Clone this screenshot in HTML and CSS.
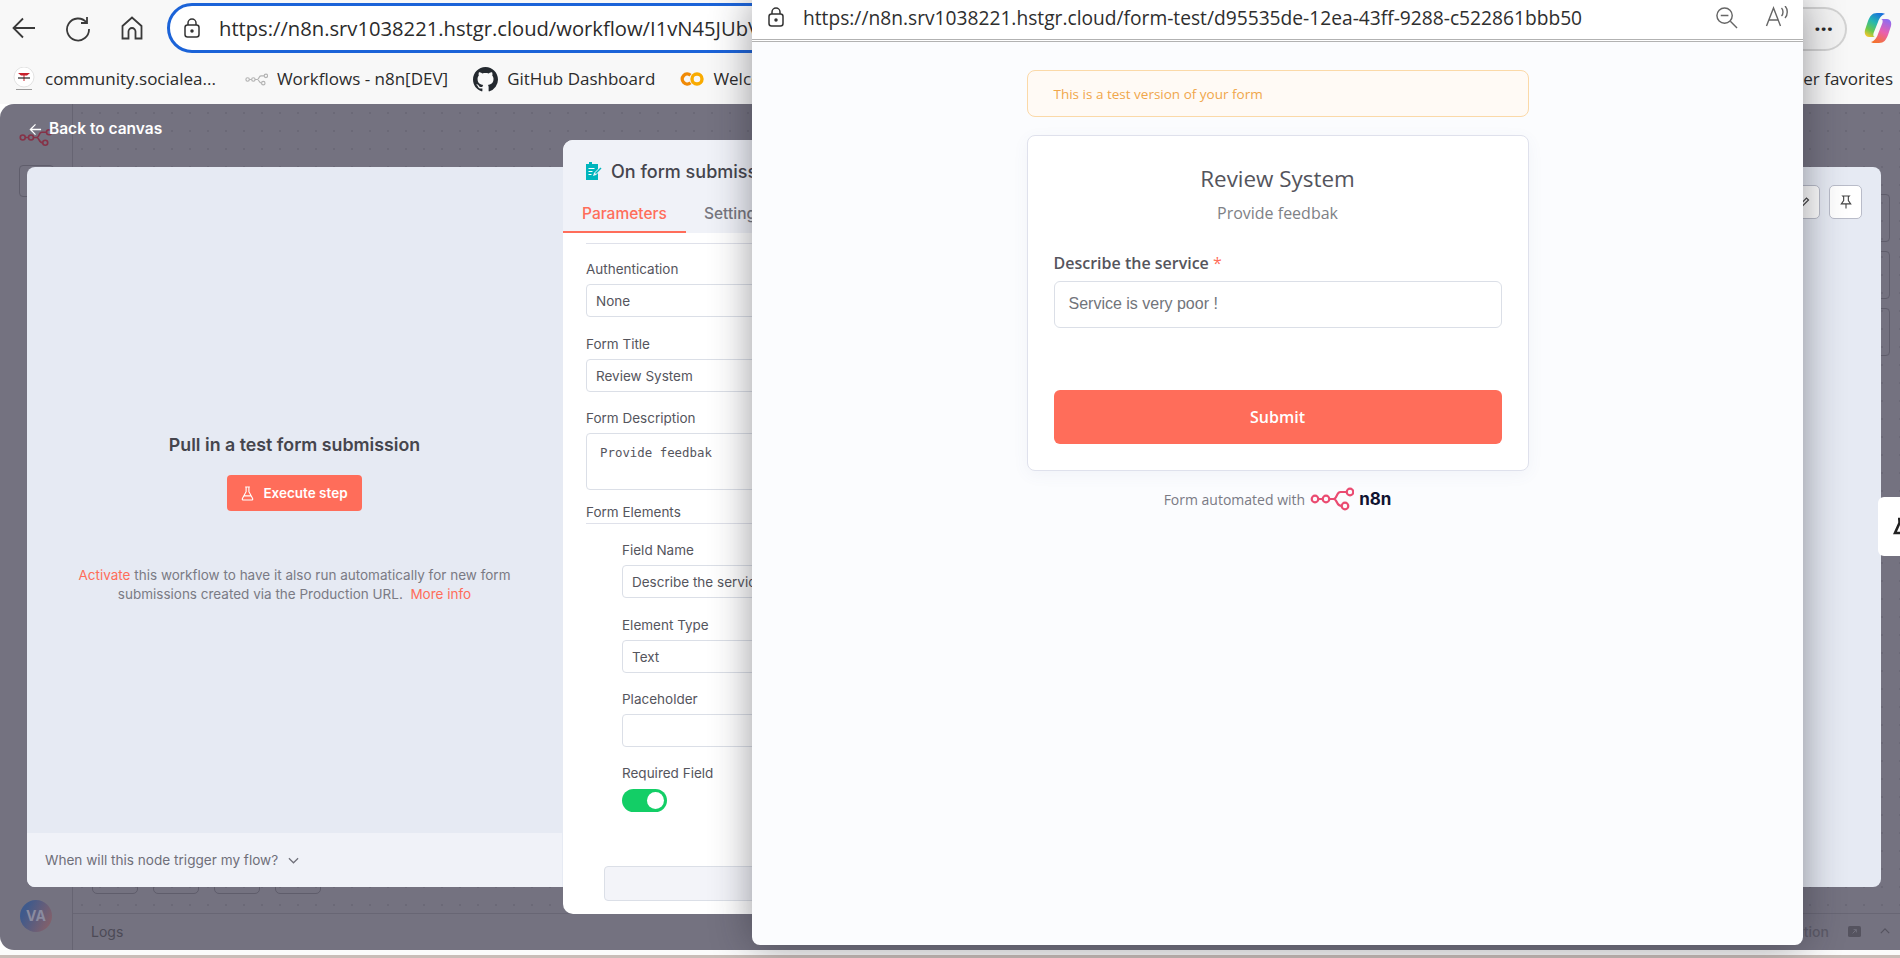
FILE: index.html
```html
<!DOCTYPE html>
<html>
<head>
    <title>Review System</title>
    <link rel="stylesheet" href="styles.css">
</head>
<body>
    <div class="browser">
        <div class="toolbar">
            <svg class="tool-icon back" viewBox="0 0 24 24"><path d="M23 12H1.5M11 2.5 1.5 12l9.5 9.5"/></svg>
            <svg class="tool-icon reload" viewBox="0 0 26 26"><path d="M21.5 6.5A11 11 0 1 0 24 13M22 1v6h-6"/></svg>
            <svg class="tool-icon home" viewBox="0 0 22 24"><path d="M1.5 10 11 1.5 20.5 10v12.5h-6v-7a3.5 3.5 0 0 0-7 0v7h-6z"/></svg>
            <div class="url-pill">
                <svg class="lock" viewBox="0 0 16 20"><path d="M4 7V5a4 4 0 0 1 8 0v2"/><rect x="1" y="7" width="14" height="12" rx="2.5"/><circle cx="8" cy="13" r="1" fill="#333"/></svg>
                <span>https://n8n.srv1038221.hstgr.cloud/workflow/I1vN45JUbVxyz</span>
            </div>
            <div class="end-pill"><span>···</span></div>
            <svg class="copilot" viewBox="0 0 28 32">
                <defs>
                    <linearGradient id="copA" x1="0.7" y1="0" x2="0.2" y2="1"><stop offset="0" stop-color="#1b72dc"/><stop offset="0.4" stop-color="#25b8b0"/><stop offset="0.75" stop-color="#6cc84a"/><stop offset="1" stop-color="#f2c62e"/></linearGradient>
                    <linearGradient id="copB" x1="0.7" y1="0" x2="0.3" y2="1"><stop offset="0" stop-color="#8f6cf0"/><stop offset="0.5" stop-color="#e95fb0"/><stop offset="1" stop-color="#f4722e"/></linearGradient>
                </defs>
                <path d="M13 1c-5 0-7 3-9 8L1 18c-1 4 1 7 4 7h6c-2 0-2-3-1-5l4-10c1-3 3-7 7-8-1-1-3-1-4-1z" fill="url(#copA)"/>
                <path d="M15 31c5 0 7-3 9-8l3-9c1-4-1-7-4-7h-6c2 0 2 3 1 5l-4 10c-1 3-3 7-7 8 1 1 3 1 4 1z" fill="url(#copB)"/>
            </svg>
        </div>
        <div class="bookmarks">
            <div class="bookmark first">
                <svg class="mark-social" viewBox="0 0 24 24"><circle cx="12" cy="10" r="10" fill="#fff" stroke="#e3e3e3"/><path d="M6 6h12l-3 2.500h-2.500V14h-1V8.500H9z" fill="#c8202c"/><path d="M6 11h12" stroke="#222" stroke-width="1.200"/><path d="M4 22.500h16" stroke="#999"/></svg>
                <span>community.socialea...</span>
            </div>
            <div class="bookmark second">
                <svg class="mark-n8n" viewBox="0 0 44 24"><use href="#n8nLogo"/></svg>
                <span>Workflows - n8n[DEV]</span>
            </div>
            <div class="bookmark third">
                <svg class="mark-github" viewBox="0 0 16 16"><path d="M8 0C3.58 0 0 3.58 0 8c0 3.54 2.29 6.53 5.47 7.59.4.07.55-.17.55-.38 0-.19-.01-.82-.01-1.49-2.01.37-2.53-.49-2.69-.94-.09-.23-.48-.94-.82-1.13-.28-.15-.68-.52-.01-.53.63-.01 1.08.58 1.23.82.72 1.21 1.87.87 2.33.66.07-.52.28-.87.51-1.07-1.78-.2-3.64-.89-3.64-3.95 0-.87.31-1.59.82-2.15-.08-.2-.36-1.02.08-2.12 0 0 .67-.21 2.2.82.64-.18 1.32-.27 2-.27.68 0 1.36.09 2 .27 1.53-1.04 2.2-.82 2.2-.82.44 1.1.16 1.92.08 2.12.51.56.82 1.27.82 2.15 0 3.07-1.87 3.75-3.65 3.95.29.25.54.73.54 1.48 0 1.07-.01 1.93-.01 2.2 0 .21.15.46.55.38A8.013 8.013 0 0016 8c0-4.42-3.58-8-8-8z"/></svg>
                <span>GitHub Dashboard</span>
            </div>
            <div class="bookmark fourth">
                <svg class="mark-colab" viewBox="0 0 24 14"><circle cx="17" cy="7" r="5" stroke="#f9ab00"/><path d="M10.500 3.200A5 5 0 1 0 10.500 10.800" stroke="#f08a06"/></svg>
                <span>Welcome To Colab</span>
            </div>
            <div class="other-favorites">Other favorites</div>
        </div>
    </div>

    <div class="app">
        <div class="sidebar">
            <div class="avatar">VA</div>
        </div>
        <div class="canvas">
            <div class="canvas-nodes">
                <i></i><i></i><i></i><i></i>
            </div>
            <div class="logs-bar">
                <span>Logs</span>
                <span class="logs-right">Execution
                    <svg viewBox="0 0 16 14"><rect x="1" y="1" width="14" height="12" rx="2" fill="#55535f"/><path d="M6 9l4-4M7 5h3v3" stroke="#747280" fill="none"/></svg>
                    <svg class="logs-up" viewBox="0 0 12 7"><path d="M1 6l5-5 5 5"/></svg>
                </span>
            </div>
        </div>

        <svg class="dim-logo" viewBox="0 0 44 24"><use href="#n8nLogo"/></svg>
        <div class="side-box"></div>
        <div class="right-boxes"><i></i><i></i><i></i></div>

        <div class="back-link">
            <svg viewBox="0 0 14 14"><path d="M13 7H1.500M7 1.500 1.500 7 7 12.500"/></svg>
            <span>Back to canvas</span>
        </div>

        <div class="ndv">
            <div class="input-panel">
                <div class="input-body">
                    <h3>Pull in a test form submission</h3>
                    <button class="execute">
                        <svg viewBox="0 0 14 16"><path d="M4.500 1h5M5.500 1v5L1.500 13.500c-.5 1 .2 1.500 1 1.500h9c.8 0 1.500-.5 1-1.500L8.500 6V1M3.500 10.500h7"/></svg>
                        Execute step
                    </button>
                    <p><a>Activate</a> this workflow to have it also run automatically for new form<br>submissions created via the Production URL.&nbsp; <a>More info</a></p>
                </div>
                <div class="input-foot">
                    When will this node trigger my flow?
                    <svg viewBox="0 0 12 7"><path d="M1 1l5 5 5-5"/></svg>
                </div>
            </div>
            <div class="ndv-tools">
                <span class="tool-btn"><svg viewBox="0 0 14 14"><path d="M2 12l1-3 6.500-6.500 2 2L5 11z"/></svg></span>
                <span class="tool-btn"><svg viewBox="0 0 14 16"><path d="M3.500 1h7l-1 1v4L12 9.500H2L4.500 6V2zM7 9.500v5"/></svg></span>
            </div>
        </div>

        <div class="help-tab">
            <svg viewBox="0 0 20 20"><path d="M7 2h3M8.500 2v4L4 16h12" fill="none" stroke="#222" stroke-width="2.600"/></svg>
        </div>

        <div class="params">
            <div class="params-head">
                <div class="params-title">
                    <svg viewBox="0 0 18 18"><path d="M2 2h3V0h3v2h6v5l-4 4-1 3 3-1 2-2v7H2z" fill="#00b5bd"/><path d="M4.500 6.500h6M4.500 9.500h4M4.500 12.500h3" stroke="#fff"/><path d="M11 11l5.500-5.500 1 1L12 12z" fill="#00b5bd"/></svg>
                    <span>On form submission</span>
                </div>
                <div class="tabs">
                    <span class="tab active">Parameters</span>
                    <span class="tab">Settings</span>
                </div>
            </div>
            <div class="params-body">
                <div class="rule"></div>
                <label class="first-label">Authentication</label>
                <div class="field">None</div>
                <label>Form Title</label>
                <div class="field">Review System</div>
                <label>Form Description</label>
                <div class="field area">Provide feedbak</div>
                <label class="section">Form Elements</label>
                <div class="element">
                    <label>Field Name</label>
                    <div class="field">Describe the service</div>
                    <label>Element Type</label>
                    <div class="field">Text</div>
                    <label>Placeholder</label>
                    <div class="field last-field"></div>
                    <label>Required Field</label>
                    <div class="toggle"><i></i></div>
                </div>
                <div class="add-element"></div>
            </div>
        </div>
    </div>
    <div class="bottom-strip"></div>

    <div class="popup">
        <div class="popup-bar">
            <svg class="lock" viewBox="0 0 16 20"><path d="M4 7V5a4 4 0 0 1 8 0v2"/><rect x="1" y="7" width="14" height="12" rx="2.5"/><circle cx="8" cy="13" r="1" fill="#333"/></svg>
            <span class="popup-url">https://n8n.srv1038221.hstgr.cloud/form-test/d95535de-12ea-43ff-9288-c522861bbb50</span>
            <svg class="popup-zoom" viewBox="0 0 24 24"><circle cx="10" cy="10" r="8"/><path d="M6 10h8M16 16l7 7"/></svg>
            <svg class="popup-read" viewBox="0 0 24 22"><path d="M2 20 9 2l7 18M4.500 14h9M17 2c2 2 2 6 0 8M20.500 0c3 3 3 9 0 12"/></svg>
        </div>
        <div class="form-page">
            <div class="test-alert">This is a test version of your form</div>
            <div class="form-card">
                <h1>Review System</h1>
                <div class="form-desc">Provide feedbak</div>
                <div class="form-label">Describe the service <b>*</b></div>
                <div class="form-input">Service is very poor !</div>
                <button class="submit">Submit</button>
            </div>
            <div class="form-foot">
                <span>Form automated with</span>
                <svg viewBox="0 0 44 24">
                    <g id="n8nLogo" fill="none" stroke="#ea4b71" stroke-width="2.200">
                        <circle cx="5" cy="12" r="3.300"/>
                        <circle cx="16" cy="12" r="3.300"/>
                        <circle cx="40" cy="5" r="3.300"/>
                        <circle cx="35" cy="19" r="3.300"/>
                        <path d="M8.300 12h4.400M19.300 12h4.200c4 0 2.500-7 7-7h6.200M23.500 12c4 0 2.500 7 8.200 7"/>
                    </g>
                </svg>
                <strong>n8n</strong>
            </div>
        </div>
    </div>
</body>
</html>
```

FILE: styles.css
```css
html, body {
    margin: 0;
    padding: 0;
    height: 958px;
    overflow: hidden;
}

body {
    position: relative;
    background: #fff;
    font-family: 'Inter', 'Liberation Sans', sans-serif;
}

/* browser chrome */

.browser {
    height: 104px;
    background: #f8f8f8;
    font-family: 'Open Sans', 'Noto Sans', sans-serif;
    color: #2b2b2b;
}

.toolbar {
    height: 60px;
    display: flex;
    align-items: flex-start;
    padding-top: 3px;
    box-sizing: border-box;
}

.tool-icon {
    fill: none;
    stroke: #3a3a3a;
    stroke-width: 1.8;
    flex: none;
    margin-top: 13px;
}

.back {
    width: 24px;
    height: 24px;
    margin-left: 12px;
}

.reload {
    width: 26px;
    height: 26px;
    margin-left: 29px;
}

.home {
    width: 22px;
    height: 24px;
    margin-left: 30px;
}

.url-pill {
    margin-left: 24px;
    width: 680px;
    height: 50px;
    border: 3px solid #1b63d8;
    border-radius: 26px;
    box-sizing: border-box;
    background: #fff;
    display: flex;
    align-items: center;
    padding-left: 14px;
    gap: 19px;
    font-size: 20.200px;
    white-space: nowrap;
    overflow: hidden;
}

.lock {
    width: 16px;
    height: 20px;
    flex: none;
    fill: none;
    stroke: #333;
    stroke-width: 1.5;
}

.end-pill {
    margin-left: auto;
    margin-top: 4px;
    width: 90px;
    height: 44px;
    border: 2px solid #d2d2d2;
    border-left: 0;
    border-radius: 0 24px 24px 0;
    box-sizing: border-box;
    background: #f3f3f3;
    text-align: right;
    padding-right: 12px;
    font-size: 22px;
    font-weight: 700;
    line-height: 38px;
}

.copilot {
    width: 28px;
    height: 32px;
    margin: 9px 8px 0 17px;
    flex: none;
}

.bookmarks {
    height: 44px;
    display: flex;
    align-items: flex-start;
    padding-top: 2px;
    box-sizing: border-box;
    font-size: 17px;
    line-height: 34px;
}

.bookmark {
    display: flex;
    align-items: center;
    white-space: nowrap;
}

.first {
    margin-left: 12px;
}

.mark-social {
    width: 24px;
    height: 24px;
    margin-right: 9px;
}

.second {
    margin-left: 29px;
}

.mark-n8n {
    width: 23px;
    height: 13px;
    margin-right: 9px;
    opacity: 0.5;
    filter: grayscale(1);
}

.third {
    margin-left: 25px;
}

.mark-github {
    width: 25px;
    height: 25px;
    margin-right: 9px;
    fill: #24292f;
}

.fourth {
    margin-left: 25px;
}

.mark-colab {
    width: 24px;
    height: 14px;
    margin-right: 9px;
    fill: none;
    stroke-width: 3.400;
}

.other-favorites {
    margin-left: auto;
    margin-right: 7px;
}

/* n8n app under the dim overlay */

.app {
    position: relative;
    height: 846px;
    background: #747280;
    border-radius: 14px 0 0 14px;
    display: flex;
    overflow: hidden;
    color: #46444f;
}

.bottom-strip {
    height: 8px;
    background: linear-gradient(#fbfbfb 0, #fbfbfb 5px, #c9bdb8 5px);
}

.sidebar {
    width: 72px;
    flex: none;
    border-right: 1px solid #666472;
    position: relative;
}

.avatar {
    position: absolute;
    left: 20px;
    top: 796px;
    width: 32px;
    height: 32px;
    border-radius: 50%;
    background: linear-gradient(115deg, #3f5a8c 20%, #80606c 85%);
    color: #8a8ba0;
    font-size: 14px;
    font-weight: 700;
    line-height: 32px;
    text-align: center;
}

.canvas {
    flex: 1;
    background-image: radial-gradient(#6b6977 1px, transparent 1px);
    background-size: 18px 18px;
    position: relative;
}

.canvas-nodes {
    position: absolute;
    left: 19px;
    top: 760px;
    display: flex;
    gap: 15px;
}

.canvas-nodes i {
    width: 46px;
    height: 30px;
    border: 1px solid #5f5d6b;
    border-radius: 5px;
    box-sizing: border-box;
}

.logs-bar {
    position: absolute;
    left: 0;
    right: 0;
    top: 809px;
    bottom: 0;
    background: #747280;
    border-top: 1px solid #686674;
    display: flex;
    justify-content: space-between;
    align-items: center;
    padding: 0 10px 2px 18px;
    font-size: 14px;
    color: #4c4a56;
}

.logs-right {
    display: flex;
    align-items: center;
    gap: 18px;
    font-size: 14px;
    font-weight: 500;
    color: #5c5a68;
}

.logs-right svg {
    width: 15px;
    height: 13px;
}

.logs-right .logs-up {
    width: 10px;
    height: 6px;
    fill: none;
    stroke: #55535f;
    stroke-width: 1.4;
}

.dim-logo {
    position: absolute;
    left: 19px;
    top: 24px;
    width: 33px;
    height: 19px;
    opacity: 0.9;
    filter: brightness(0.58);
}

.side-box {
    position: absolute;
    left: 19px;
    top: 61px;
    width: 33px;
    height: 30px;
    border: 1px solid #5f5d6b;
    border-radius: 4px;
}

.right-boxes {
    position: absolute;
    right: 10px;
    top: 90px;
    display: flex;
    flex-direction: column;
    gap: 9px;
}

.right-boxes i {
    display: block;
    width: 30px;
    height: 48px;
    border: 1px solid #5f5d6b;
    border-radius: 4px;
    box-sizing: border-box;
}

.help-tab {
    position: absolute;
    right: 0;
    top: 393px;
    width: 22px;
    height: 59px;
    background: #fff;
    border-radius: 6px 0 0 6px;
    overflow: hidden;
}

.help-tab svg {
    width: 20px;
    height: 20px;
    margin: 20px 0 0 13px;
}

.back-link {
    position: absolute;
    left: 29px;
    top: 15px;
    display: flex;
    align-items: center;
    gap: 7px;
    color: #fff;
    font-size: 15.500px;
    font-weight: 600;
    line-height: 20px;
}

.back-link svg {
    width: 13px;
    height: 13px;
    fill: none;
    stroke: #fff;
    stroke-width: 1.4;
}

/* node details view */

.ndv {
    position: absolute;
    left: 27px;
    top: 63px;
    width: 1854px;
    height: 720px;
    background: #e6eaf3;
    border-radius: 8px;
    overflow: hidden;
}

.input-panel {
    width: 535px;
    height: 100%;
    display: flex;
    flex-direction: column;
}

.input-body {
    flex: 1;
    display: flex;
    flex-direction: column;
    align-items: center;
    padding-top: 267px;
    box-sizing: border-box;
}

.input-body h3 {
    margin: 0;
    font-size: 17.800px;
    line-height: 22px;
    font-weight: 600;
    color: #45454d;
}

.execute {
    margin-top: 19px;
    width: 135px;
    height: 36px;
    border: 0;
    border-radius: 4px;
    background: #ff6d5a;
    color: #fff;
    font-family: inherit;
    font-size: 13.500px;
    font-weight: 600;
    display: flex;
    align-items: center;
    justify-content: center;
    gap: 9px;
}

.execute svg {
    width: 13px;
    height: 15px;
    fill: none;
    stroke: #fff;
    stroke-width: 1.2;
}

.input-body p {
    margin: 55px 0 0;
    text-align: center;
    font-size: 13.500px;
    line-height: 18.500px;
    color: #7a7a84;
}

.input-body a {
    color: #ff6d5a;
}

.input-foot {
    height: 54px;
    background: #f0f2f8;
    display: flex;
    align-items: center;
    padding-left: 18px;
    gap: 10px;
    font-size: 13.600px;
    color: #6f6f79;
}

.input-foot svg {
    width: 11px;
    height: 7px;
    fill: none;
    stroke: #6f6f79;
    stroke-width: 1.3;
}

.ndv-tools {
    position: absolute;
    right: 19px;
    top: 18px;
    display: flex;
    gap: 9px;
}

.tool-btn {
    width: 33px;
    height: 34px;
    background: #fff;
    border: 1px solid #b9bcc9;
    border-radius: 5px;
    box-sizing: border-box;
    display: flex;
    align-items: center;
    justify-content: center;
}

.tool-btn svg {
    width: 14px;
    height: 15px;
    fill: none;
    stroke: #444;
    stroke-width: 1.2;
}

.params {
    position: absolute;
    left: 563px;
    top: 36px;
    width: 400px;
    height: 774px;
    background: #fff;
    border-radius: 10px;
    overflow: hidden;
    color: #55555d;
    font-size: 14px;
}

.params-head {
    height: 93px;
    background: #f0f2f8;
    box-sizing: border-box;
    padding-top: 21px;
}

.params-title {
    display: flex;
    align-items: center;
    gap: 9px;
    padding-left: 21px;
    height: 20px;
    font-size: 18px;
    font-weight: 500;
    color: #45454d;
    white-space: nowrap;
}

.params-title svg {
    width: 18px;
    height: 18px;
    flex: none;
}

.tabs {
    display: flex;
    margin-top: 22px;
    font-size: 15.500px;
    font-weight: 500;
}

.tab {
    padding: 0 19px;
    height: 30px;
    box-sizing: border-box;
    line-height: 22px;
    color: #77777f;
}

.tab.active {
    width: 123px;
    color: #ff6d5a;
    border-bottom: 2px solid #ff6d5a;
}

.tab + .tab {
    padding-left: 18px;
}

.params-body {
    padding: 10px 0 0 23px;
}

.rule {
    height: 1px;
    background: #dfe1ea;
}

.params-body label {
    display: block;
    height: 17px;
    line-height: 17px;
    margin: 9px 0 6px;
    font-size: 13.500px;
}

.params-body .first-label {
    margin-top: 17px;
}

.field {
    height: 33px;
    border: 1px solid #dbdfe7;
    border-radius: 4px;
    box-sizing: border-box;
    line-height: 32px;
    padding-left: 9px;
    font-size: 13.500px;
    margin-bottom: 18.500px;
    background: #fff;
    white-space: nowrap;
}

.field.area {
    height: 57px;
    line-height: 38px;
    padding-left: 13px;
    font-family: 'DejaVu Sans Mono', 'Liberation Mono', monospace;
    font-size: 12.400px;
    margin-bottom: 14px;
}

.field.last-field {
    margin-bottom: 17.500px;
}

.params-body .section {
    padding-bottom: 2px;
    margin-bottom: 0;
    border-bottom: 1px solid #dfe1ea;
    box-sizing: content-box;
}

.element {
    padding-left: 36px;
    padding-top: 9px;
}

.toggle {
    width: 45px;
    height: 23px;
    margin-top: 7px;
    border-radius: 12px;
    background: #13ce66;
    position: relative;
}

.toggle i {
    position: absolute;
    right: 3px;
    top: 3px;
    width: 17px;
    height: 17px;
    border-radius: 50%;
    background: #fff;
}

.add-element {
    margin: 54px 0 0 18px;
    height: 33px;
    background: #f3f4f9;
    border: 1px solid #dbdfe7;
    border-radius: 4px;
}

/* popup window with the form */

.popup {
    position: absolute;
    left: 752px;
    top: 0;
    width: 1051px;
    height: 945px;
    background: #fbfcfe;
    border-radius: 0 0 8px 8px;
    box-shadow: 0 0 40px rgba(30, 30, 40, 0.45);
    overflow: hidden;
}

.popup-bar {
    height: 42px;
    box-sizing: border-box;
    padding: 0 0 5px 16px;
    background: #fff;
    border-bottom: 3px double #b2b2b2;
    display: flex;
    align-items: center;
    font-family: 'Open Sans', 'Noto Sans', sans-serif;
    font-size: 19.200px;
    color: #2e2e2e;
    white-space: nowrap;
}

.popup-url {
    margin-left: 19px;
}

.popup-zoom {
    width: 23px;
    height: 23px;
    margin-left: 133px;
    fill: none;
    stroke: #666;
    stroke-width: 1.5;
}

.popup-read {
    width: 25px;
    height: 22px;
    margin-left: 26px;
    fill: none;
    stroke: #666;
    stroke-width: 1.4;
}

.form-page {
    width: 502px;
    margin: 28px auto 0;
    font-family: 'Open Sans', 'Noto Sans', sans-serif;
}

.test-alert {
    height: 47px;
    box-sizing: border-box;
    border: 1px solid #fbd9a8;
    border-radius: 8px;
    background: #fffaf5;
    color: #f0a64a;
    font-size: 13.500px;
    line-height: 46px;
    padding-left: 26px;
}

.form-card {
    margin-top: 18px;
    height: 336px;
    box-sizing: border-box;
    border: 1px solid #dfe1ec;
    border-radius: 8px;
    background: #fff;
    box-shadow: 0 4px 16px rgba(90, 100, 150, 0.06);
    padding: 26px 26px 0;
    text-align: center;
}

.form-card h1 {
    margin: 0;
    font-size: 22.400px;
    line-height: 34px;
    font-weight: 400;
    color: #54545c;
}

.form-desc {
    margin-top: 5px;
    font-size: 16px;
    line-height: 24px;
    color: #7e8186;
}

.form-label {
    margin-top: 26px;
    text-align: left;
    font-size: 16px;
    line-height: 24px;
    font-weight: 600;
    color: #55555d;
}

.form-label b {
    color: #ff6d5a;
    font-weight: 400;
}

.form-input {
    margin-top: 6px;
    height: 47px;
    box-sizing: border-box;
    border: 1px solid #dbdfe7;
    border-radius: 6px;
    text-align: left;
    padding-left: 14px;
    line-height: 43px;
    font-family: 'Liberation Sans', Arial, sans-serif;
    font-size: 16px;
    color: #71747a;
}

.submit {
    margin-top: 62px;
    width: 100%;
    height: 54px;
    border: 0;
    border-radius: 6px;
    background: #ff6d5a;
    color: #fff;
    font-family: inherit;
    font-size: 16px;
    font-weight: 600;
}

.form-foot {
    margin-top: 16px;
    display: flex;
    align-items: center;
    justify-content: center;
    gap: 5px;
    height: 24px;
    font-size: 14px;
    font-weight: 500;
    color: #7a7a84;
}

.form-foot svg {
    width: 44px;
    height: 24px;
}

.form-foot strong {
    font-size: 17px;
    font-family: 'Inter', sans-serif;
    color: #101330;
}
```
